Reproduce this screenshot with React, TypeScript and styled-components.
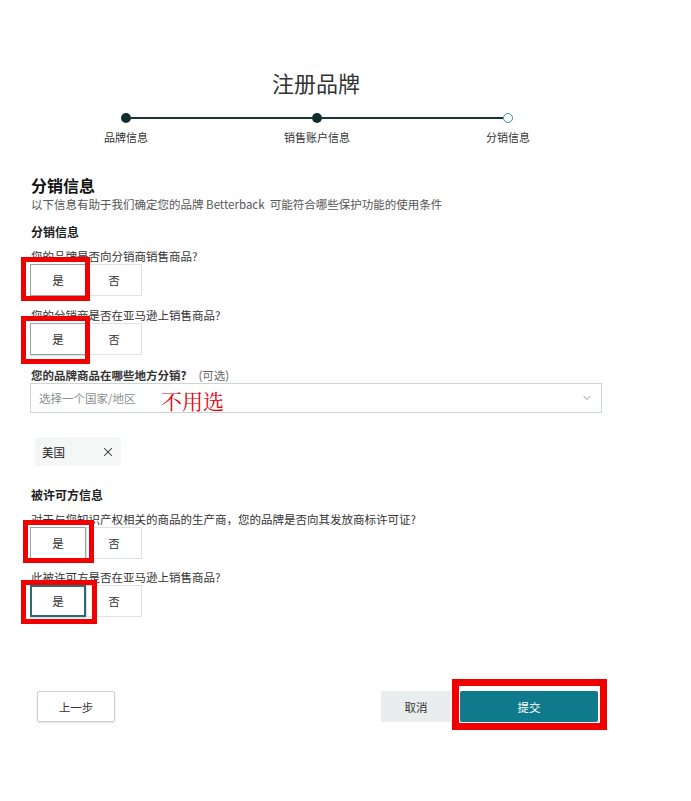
import React from 'react';
import styled, { createGlobalStyle } from 'styled-components';
import { ChevronDown, X } from 'lucide-react';

const GlobalStyle = createGlobalStyle`
  html, body { margin: 0; padding: 0; background: #fff; }
  body {
    font-family: "Noto Sans CJK SC", "Noto Sans", "Liberation Sans", sans-serif;
    color: #0f1111;
  }
  * { box-sizing: border-box; }
`;

const Page = styled.div`
  width: 691px;
  min-height: 801px;
  padding: 67px 0 0 30px;
`;

const Container = styled.div`
  width: 572px;
  display: flex;
  flex-direction: column;
`;

const Title = styled.h1`
  margin: 0;
  text-align: center;
  font-size: 22px;
  line-height: 30px;
  font-weight: 400;
  color: #333;
`;

const Stepper = styled.div`
  display: flex;
  width: 392px;
  margin: 16px 0 0 91px;
`;

const Step = styled.div`
  display: flex;
  flex-direction: column;
  align-items: center;
  width: 10px;
`;

const Dot = styled.div<{ $done: boolean }>`
  width: 10px;
  height: 10px;
  border-radius: 50%;
  background: ${p => (p.$done ? '#0f2e2e' : '#fff')};
  border: ${p => (p.$done ? 'none' : '1.5px solid #3f8f9b')};
`;

const Connector = styled.div`
  flex: 1;
  height: 2px;
  margin-top: 4px;
  background: #183535;
`;

const StepLabel = styled.div`
  margin-top: 7px;
  font-size: 11px;
  line-height: 14px;
  white-space: nowrap;
  color: #333;
`;

const Heading = styled.h2`
  margin: 30px 0 0 1px;
  font-size: 16px;
  line-height: 22px;
  font-weight: 700;
  color: #0f1111;
`;

const Subtitle = styled.p`
  margin: 0 0 0 1px;
  font-size: 11.5px;
  line-height: 16px;
  color: #555;
  white-space: pre;
`;

const SubHeading = styled.h3<{ $top: number }>`
  margin: ${p => p.$top}px 0 0 1px;
  font-size: 12px;
  line-height: 18px;
  font-weight: 700;
  color: #222;
`;

const Question = styled.div<{ $top: number; $bold?: boolean }>`
  margin: ${p => p.$top}px 0 0 1px;
  font-size: 11.5px;
  line-height: 16px;
  color: #333;
  font-weight: ${p => (p.$bold ? 700 : 400)};
`;

const Optional = styled.span`
  font-weight: 400;
  color: #666;
  margin-left: 12px;
`;

const ChoiceGroup = styled.div`
  display: flex;
  position: relative;
`;

const Choice = styled.button<{ $state?: 'selected' | 'focused' }>`
  width: 56px;
  height: 32px;
  margin: 0;
  padding: 0;
  background: #fff;
  font-family: inherit;
  font-size: 11.5px;
  color: #333;
  border: ${p =>
    p.$state === 'focused'
      ? '2px solid #2b6b78'
      : p.$state === 'selected'
      ? '1px solid #9aa4a4'
      : '1px solid #dfe3e3'};
  box-shadow: ${p => (p.$state ? '0 1px 1px rgba(0,0,0,0.12)' : 'none')};
  & + & { margin-left: -1px; }
`;

const RedMark = styled.span<{ $t: number; $r: number; $b: number; $l: number; $w?: number }>`
  position: absolute;
  top: ${p => p.$t}px;
  right: ${p => p.$r}px;
  bottom: ${p => p.$b}px;
  left: ${p => p.$l}px;
  border: ${p => p.$w ?? 5}px solid #f00000;
  pointer-events: none;
`;

const MarkedChoice = styled.div`
  position: relative;
  display: flex;
`;

const SelectBox = styled.div`
  position: relative;
  height: 30px;
  display: flex;
  align-items: center;
  justify-content: space-between;
  padding: 0 8px;
  border: 1px solid #cfd4d4;
  background: #fff;
  font-size: 11.5px;
  color: #8a8f8f;
`;

const Note = styled.span`
  position: absolute;
  left: 130px;
  top: 50%;
  transform: translateY(-42%);
  font-family: "Noto Serif CJK SC", "Liberation Serif", serif;
  font-size: 21px;
  line-height: 22px;
  color: #e8000b;
`;

const Tag = styled.div`
  margin: 24px 0 0 5px;
  width: 86px;
  height: 29px;
  display: flex;
  align-items: center;
  justify-content: space-between;
  padding: 0 6px 0 7px;
  background: #f5f7f7;
  font-size: 11.5px;
  color: #222;
`;

const Footer = styled.div`
  display: flex;
  align-items: center;
  margin-top: 74px;
`;

const FooterButton = styled.button<{ $variant: 'outline' | 'muted' | 'primary'; $w: number }>`
  width: ${p => p.$w}px;
  height: 31px;
  padding: 0;
  font-family: inherit;
  font-size: 11.5px;
  border-radius: 2px;
  color: ${p => (p.$variant === 'primary' ? '#fff' : '#333')};
  background: ${p =>
    p.$variant === 'primary' ? '#0f7a8b' : p.$variant === 'muted' ? '#e9eded' : '#fff'};
  border: ${p =>
    p.$variant === 'outline' ? '1px solid #c9cfcf' : '1px solid transparent'};
  box-shadow: ${p => (p.$variant === 'outline' ? '0 1px 2px rgba(0,0,0,0.12)' : 'none')};
`;

const BackButton = styled(FooterButton)`
  margin-left: 7px;
`;

const Spacer = styled.div`
  flex: 1;
`;

const SubmitWrap = styled.div`
  position: relative;
  display: flex;
  margin: 0 4px 0 9px;
`;

type Mark = { t: number; r: number; b: number; l: number };

function YesNo({ mark, focused }: { mark: Mark; focused?: boolean }) {
  return (
    <ChoiceGroup>
      <MarkedChoice>
        <Choice $state={focused ? 'focused' : 'selected'}>是</Choice>
        <RedMark $t={mark.t} $r={mark.r} $b={mark.b} $l={mark.l} />
      </MarkedChoice>
      <Choice>否</Choice>
    </ChoiceGroup>
  );
}

const steps = [
  { label: '品牌信息', done: true },
  { label: '销售账户信息', done: true },
  { label: '分销信息', done: false },
];

export default function App() {
  return (
    <>
      <GlobalStyle />
      <Page>
        <Container>
          <Title>注册品牌</Title>
          <Stepper>
            {steps.map((s, i) => (
              <React.Fragment key={s.label}>
                {i > 0 && <Connector />}
                <Step>
                  <Dot $done={s.done} />
                  <StepLabel>{s.label}</StepLabel>
                </Step>
              </React.Fragment>
            ))}
          </Stepper>

          <Heading>分销信息</Heading>
          <Subtitle>以下信息有助于我们确定您的品牌 Betterback  可能符合哪些保护功能的使用条件</Subtitle>

          <SubHeading $top={11}>分销信息</SubHeading>
          <Question $top={7}>您的品牌是否向分销商销售商品?</Question>
          <YesNo mark={{ t: -7, r: -4, b: -5, l: -9 }} />
          <Question $top={11}>您的分销商是否在亚马逊上销售商品?</Question>
          <YesNo mark={{ t: -7, r: -4, b: -9, l: -9 }} />

          <Question $top={12} $bold>
            您的品牌商品在哪些地方分销?<Optional>(可选)</Optional>
          </Question>
          <SelectBox>
            <span>选择一个国家/地区</span>
            <ChevronDown size={12} color="#8a9090" strokeWidth={2} />
            <Note>不用选</Note>
          </SelectBox>

          <Tag>
            <span>美国</span>
            <X size={14} color="#333" strokeWidth={1.8} />
          </Tag>

          <SubHeading $top={20}>被许可方信息</SubHeading>
          <Question $top={7}>对于与您知识产权相关的商品的生产商，您的品牌是否向其发放商标许可证?</Question>
          <YesNo mark={{ t: -7, r: -8, b: -4, l: -7 }} />
          <Question $top={10}>此被许可方是否在亚马逊上销售商品?</Question>
          <YesNo focused mark={{ t: -5, r: -11, b: -7, l: -9 }} />

          <Footer>
            <BackButton $variant="outline" $w={78}>上一步</BackButton>
            <Spacer />
            <FooterButton $variant="muted" $w={70}>取消</FooterButton>
            <SubmitWrap>
              <FooterButton $variant="primary" $w={138}>提交</FooterButton>
              <RedMark $t={-12} $r={-9} $b={-8} $l={-8} $w={7} />
            </SubmitWrap>
          </Footer>
        </Container>
      </Page>
    </>
  );
}
